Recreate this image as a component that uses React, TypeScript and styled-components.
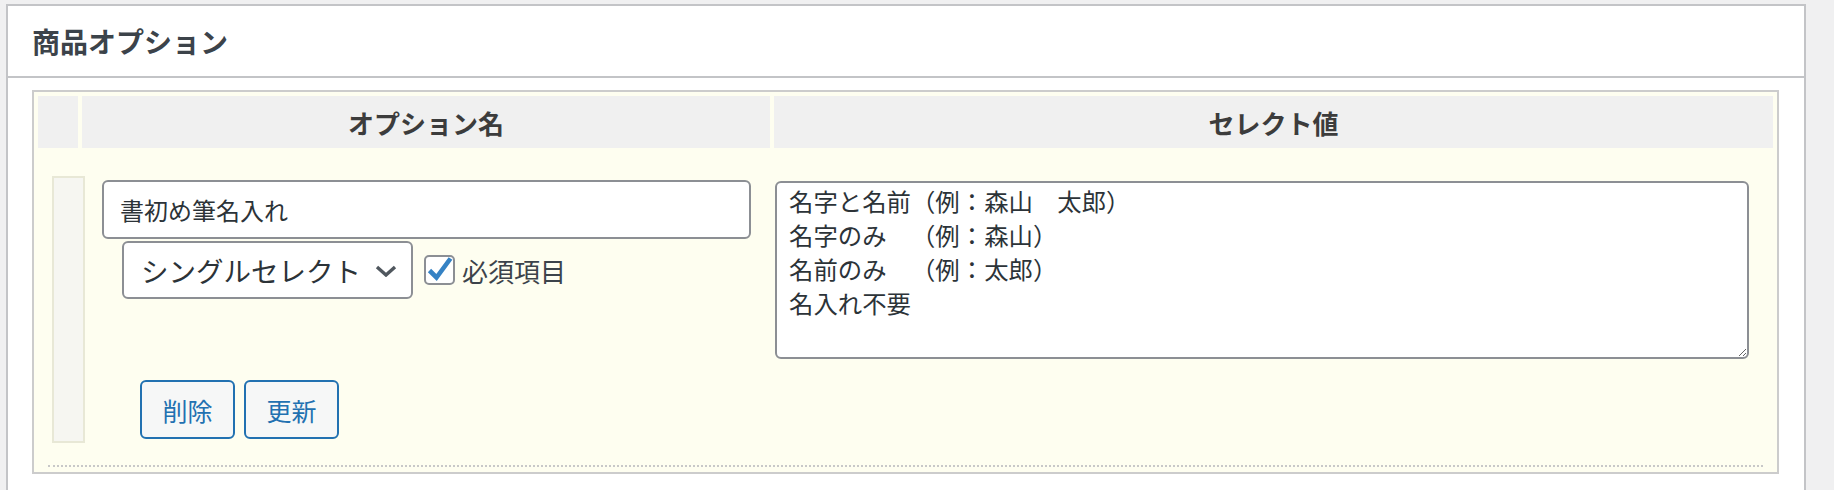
import React from "react";
import styled, { createGlobalStyle } from "styled-components";

const GlobalStyle = createGlobalStyle`
  html, body {
    margin: 0;
    padding: 0;
    background: #f0f0f1;
  }
  body {
    font-family: "Noto Sans CJK JP", "Noto Sans", sans-serif;
    color: #3c434a;
  }
  * {
    box-sizing: border-box;
  }
`;

const Page = styled.div`
  padding: 4px 0 0 6px;
`;

const Postbox = styled.section`
  width: 1800px;
  background: #fff;
  border: 2px solid #c3c4c7;
  border-bottom: none;
`;

const PostboxHeader = styled.div`
  height: 72px;
  display: flex;
  align-items: center;
  padding-left: 24px;
  border-bottom: 2px solid #c3c4c7;
`;

const Title = styled.h2`
  margin: 0;
  font-size: 28px;
  font-weight: 700;
  color: #3c434a;
`;

const PostboxBody = styled.div`
  padding: 12px 25px 20px 24px;
`;

const OptionTable = styled.div`
  display: grid;
  grid-template-columns: 40px 688px 1fr;
  gap: 4px;
  padding: 4px;
  border: 2px solid #cccccc;
  background: #fefef0;
`;

const HeadCell = styled.div`
  height: 52px;
  display: flex;
  align-items: center;
  justify-content: center;
  background: #f0f0f0;
  font-size: 26px;
  font-weight: 700;
  color: #3c3c3c;
`;

const BodyCell = styled.div`
  grid-column: 1 / -1;
  padding: 0 10px 1px 10px;
`;

const OptionRow = styled.div`
  display: flex;
  align-items: stretch;
  padding: 24px 0 22px 4px;
  border-bottom: 2px dotted #c8c8c8;
`;

const Handle = styled.div`
  flex: none;
  width: 33px;
  margin-right: 17px;
  border: 2px solid #e8e8d6;
  background: #f6f6f1;
`;

const NameCol = styled.div`
  flex: none;
  width: 649px;
  padding: 4px 0 4px 0;
  display: flex;
  flex-direction: column;
`;

const TextInput = styled.input`
  width: 100%;
  height: 59px;
  padding: 0 16px;
  border: 2px solid #8c8f94;
  border-radius: 6px;
  background: #fff;
  font-family: inherit;
  font-size: 24px;
  color: #2c3338;
  outline: none;
`;

const OptionLine = styled.div`
  display: flex;
  align-items: center;
  margin: 2px 0 0 20px;
`;

const SelectWrap = styled.div`
  position: relative;
  width: 291px;
  height: 58px;
`;

const Select = styled.select`
  width: 100%;
  height: 100%;
  appearance: none;
  padding: 0 40px 0 17px;
  border: 2px solid #8c8f94;
  border-radius: 6px;
  background: #fff;
  font-family: inherit;
  font-size: 27.5px;
  color: #2c3338;
  outline: none;
`;

const Chevron = styled.svg`
  position: absolute;
  right: 16px;
  top: 24px;
  pointer-events: none;
`;

const CheckLabel = styled.label`
  display: flex;
  align-items: center;
  gap: 7px;
  margin-left: 11px;
  font-size: 26px;
  color: #3c434a;
`;

const CheckBox = styled.span`
  width: 31px;
  height: 30px;
  border: 2px solid #8c8f94;
  border-radius: 5px;
  background: #fff;
  display: flex;
`;

const ButtonRow = styled.div`
  display: flex;
  gap: 9px;
  margin: 81px 0 0 38px;
`;

const Button = styled.button`
  width: 95px;
  height: 59px;
  padding: 0;
  border: 2px solid #2271b1;
  border-radius: 6px;
  background: #f6f7f7;
  color: #2271b1;
  font-family: inherit;
  font-size: 25px;
  cursor: pointer;
`;

const ValueCol = styled.div`
  flex: none;
  width: 974px;
  margin-left: 24px;
  padding-top: 5px;
`;

const TextArea = styled.textarea`
  display: block;
  width: 100%;
  height: 178px;
  padding: 1px 12px;
  border: 2px solid #8c8f94;
  border-radius: 6px;
  background: #fff;
  font-family: inherit;
  font-size: 24.4px;
  line-height: 34px;
  text-spacing-trim: space-all;
  color: #2c3338;
  outline: none;
`;

const values = [
  "名字と名前（例：森山　太郎）",
  "名字のみ　（例：森山）",
  "名前のみ　（例：太郎）",
  "名入れ不要",
].join("\n");

export default function App() {
  return (
    <Page>
      <GlobalStyle />
      <Postbox>
        <PostboxHeader>
          <Title>商品オプション</Title>
        </PostboxHeader>
        <PostboxBody>
          <OptionTable>
            <HeadCell />
            <HeadCell>オプション名</HeadCell>
            <HeadCell>セレクト値</HeadCell>
            <BodyCell>
              <OptionRow>
                <Handle />
                <NameCol>
                  <TextInput defaultValue="書初め筆名入れ" />
                  <OptionLine>
                    <SelectWrap>
                      <Select defaultValue="single">
                        <option value="single">シングルセレクト</option>
                        <option value="multi">マルチセレクト</option>
                      </Select>
                      <Chevron width="22" height="12" viewBox="0 0 22 12">
                        <polyline
                          points="2,2 11,10 20,2"
                          fill="none"
                          stroke="#50575e"
                          strokeWidth="3.4"
                        />
                      </Chevron>
                    </SelectWrap>
                    <CheckLabel>
                      <CheckBox>
                        <svg width="27" height="26" viewBox="0 0 27 26">
                          <polyline
                            points="3.5,13.5 10.5,20.5 24.5,1.5"
                            fill="none"
                            stroke="#3582c4"
                            strokeWidth="4.6"
                          />
                        </svg>
                      </CheckBox>
                      必須項目
                    </CheckLabel>
                  </OptionLine>
                  <ButtonRow>
                    <Button>削除</Button>
                    <Button>更新</Button>
                  </ButtonRow>
                </NameCol>
                <ValueCol>
                  <TextArea defaultValue={values} />
                </ValueCol>
              </OptionRow>
            </BodyCell>
          </OptionTable>
        </PostboxBody>
      </Postbox>
    </Page>
  );
}
